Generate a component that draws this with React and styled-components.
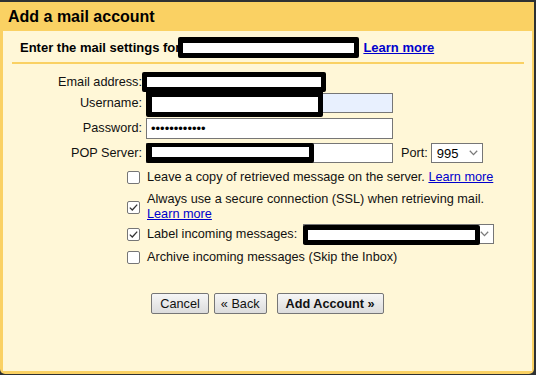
import React from 'react';
import styled, { createGlobalStyle } from 'styled-components';

const GlobalStyle = createGlobalStyle`
  html, body {
    margin: 0;
    padding: 0;
    background: #2e3133;
    font-family: "Liberation Sans", Arial, sans-serif;
    font-size: 12.7px;
    line-height: 15px;
    color: #222;
  }
`;

const Dialog = styled.div`
  margin-top: 2px;
  width: 534px;
  height: 372px;
  box-sizing: border-box;
  background: #fad163;
  border-radius: 0 0 5px 5px;
  padding: 0 2px 3px 3px;
  display: flex;
  flex-direction: column;
`;

const Title = styled.h1`
  margin: 0;
  height: 29px;
  line-height: 29px;
  padding-left: 5px;
  font-size: 16px;
  font-weight: bold;
  color: #000;
`;

const Panel = styled.div`
  flex: 1;
  background: #fff7d7;
  display: flex;
  flex-direction: column;
`;

const IntroRow = styled.div`
  display: flex;
  align-items: center;
  height: 21px;
  margin-top: 6px;
  padding-left: 17px;
  font-size: 13px;
  font-weight: bold;
  color: #000;
  white-space: nowrap;
`;

const Link = styled.a`
  color: #0000cc;
  text-decoration: underline;
  cursor: pointer;
  font-weight: ${p => (p.$bold ? 'bold' : 'normal')};
  margin-left: ${p => p.$ml || 0}px;
`;

const Separator = styled.div`
  height: 2px;
  background: #fad163;
  margin: 4px 8px 0 9px;
`;

const Form = styled.div`
  margin-top: 8px;
  display: flex;
  flex-direction: column;
`;

const FieldRow = styled.div`
  display: flex;
  align-items: center;
  height: ${p => p.$h}px;
  margin-top: ${p => p.$mt || 0}px;
`;

const Label = styled.label`
  width: 139px;
  text-align: right;
  margin-right: 4px;
  color: #111;
  white-space: nowrap;
`;

const Redact = styled.span`
  display: block;
  box-sizing: border-box;
  width: ${p => p.$w}px;
  height: ${p => p.$h}px;
  background: #fff;
  border: solid #000;
  border-width: ${p => p.$bw || '5px'};
  border-radius: 2px;
  margin-left: ${p => p.$ml || 0}px;
  flex-shrink: 0;
`;

const Overlay = styled(Redact)`
  position: absolute;
  left: ${p => p.$left || 0}px;
  top: ${p => p.$top || 0}px;
  margin: 0;
`;

const FieldWrap = styled.div`
  position: relative;
  display: flex;
`;

const TextInput = styled.input`
  width: ${p => p.$w || 247}px;
  height: ${p => p.$h || 20}px;
  box-sizing: border-box;
  border: 1px solid #767676;
  border-radius: 0;
  padding: 0 4px;
  margin: 0;
  font-family: inherit;
  font-size: 13px;
  color: #000;
  background: ${p => p.$bg || '#fff'};
  outline: none;
`;

const PortLabel = styled.span`
  margin-left: 8px;
  margin-right: 3px;
  color: #111;
`;

const Select = styled.div`
  position: relative;
  width: ${p => p.$w}px;
  height: 20px;
  box-sizing: border-box;
  border: 1px solid #767676;
  background: #fff;
  display: flex;
  align-items: center;
  justify-content: space-between;
  padding: 0 4px 0 5px;
  margin-left: ${p => p.$ml || 0}px;
  color: #000;
  font-size: 13px;
`;

const Chevron = () => (
  <svg width="9" height="6" viewBox="0 0 9 6">
    <path d="M0.8 0.8 L4.5 4.6 L8.2 0.8" stroke="#7a7a7a" strokeWidth="1.3" fill="none" />
  </svg>
);

const Options = styled.div`
  display: flex;
  flex-direction: column;
`;

const CheckRow = styled.div`
  display: flex;
  align-items: center;
  padding-left: 124px;
  min-height: ${p => p.$h}px;
  margin-top: ${p => p.$mt || 0}px;
  color: #111;
  white-space: nowrap;
`;

const Box = styled.span`
  width: 13px;
  height: 13px;
  box-sizing: border-box;
  border: 1px solid #767676;
  border-radius: 2px;
  background: #fff;
  display: flex;
  align-items: center;
  justify-content: center;
  margin-right: 7px;
  flex-shrink: 0;
`;

const CheckText = styled.span`
  display: flex;
  align-items: center;
`;

const Checkbox = ({ checked }) => (
  <Box>
    {checked && (
      <svg width="11" height="11" viewBox="0 0 11 11">
        <path d="M1.8 5.6 L4.3 8 L9.2 2.6" stroke="#333" strokeWidth="1.3" fill="none" />
      </svg>
    )}
  </Box>
);

const Buttons = styled.div`
  display: flex;
  justify-content: center;
  margin-top: 28px;
`;

const Button = styled.button`
  height: 21px;
  box-sizing: border-box;
  padding: 0 ${p => p.$pad || 8}px;
  margin-left: ${p => p.$ml || 0}px;
  border: 1px solid #767676;
  border-radius: 2px;
  background: linear-gradient(#f6f6f6, #dcdcdc);
  font-family: inherit;
  font-size: 12.7px;
  font-weight: ${p => (p.$primary ? 'bold' : 'normal')};
  color: #111;
  cursor: pointer;
`;

export default function App() {
  return (
    <>
      <GlobalStyle />
      <Dialog>
        <Title>Add a mail account</Title>
        <Panel>
          <IntroRow>
            Enter the mail settings for
            <Redact $w={181} $h={21} $ml={-2} $bw="6px 5px 5px 5px" />
            <Link $bold $ml={4}>Learn more</Link>
          </IntroRow>
          <Separator />

          <Form>
            <FieldRow $h={20}>
              <Label>Email address:</Label>
              <Redact $w={184} $h={20} $ml={-4} />
            </FieldRow>
            <FieldRow $h={20} $mt={1}>
              <Label>Username:</Label>
              <FieldWrap>
                <TextInput readOnly value="" $bg="#e8f0fe" />
                <Overlay $w={177} $h={28} $top={-4} $bw="8px 5px 5px 6px" />
              </FieldWrap>
            </FieldRow>
            <FieldRow $h={21} $mt={5}>
              <Label>Password:</Label>
              <TextInput type="password" readOnly value="xxxxxxxxxxxx" $h={21} />
            </FieldRow>
            <FieldRow $h={20} $mt={4}>
              <Label>POP Server:</Label>
              <FieldWrap>
                <TextInput readOnly value="" />
                <Overlay $w={168} $h={20} $bw="4px 5px 6px 6px" />
              </FieldWrap>
              <PortLabel>Port:</PortLabel>
              <Select $w={52}>
                995
                <Chevron />
              </Select>
            </FieldRow>
          </Form>

          <Options>
            <CheckRow $h={15} $mt={7}>
              <Checkbox />
              <CheckText>
                Leave a copy of retrieved message on the server.&nbsp;
                <Link>Learn more</Link>
              </CheckText>
            </CheckRow>
            <CheckRow $h={30} $mt={7}>
              <Checkbox checked />
              <span>
                Always use a secure connection (SSL) when retrieving mail.
                <br />
                <Link>Learn more</Link>
              </span>
            </CheckRow>
            <CheckRow $h={20} $mt={2}>
              <Checkbox checked />
              <CheckText>
                Label incoming messages:
                <Select $w={191} $ml={6}>
                  <Overlay $w={177} $h={20} $left={-1} $top={0} />
                  <span />
                  <Chevron />
                </Select>
              </CheckText>
            </CheckRow>
            <CheckRow $h={15} $mt={6}>
              <Checkbox />
              <span>Archive incoming messages (Skip the Inbox)</span>
            </CheckRow>
          </Options>

          <Buttons>
            <Button>Cancel</Button>
            <Button $ml={5} $pad={6}>« Back</Button>
            <Button $ml={10} $primary>Add Account »</Button>
          </Buttons>
        </Panel>
      </Dialog>
    </>
  );
}
